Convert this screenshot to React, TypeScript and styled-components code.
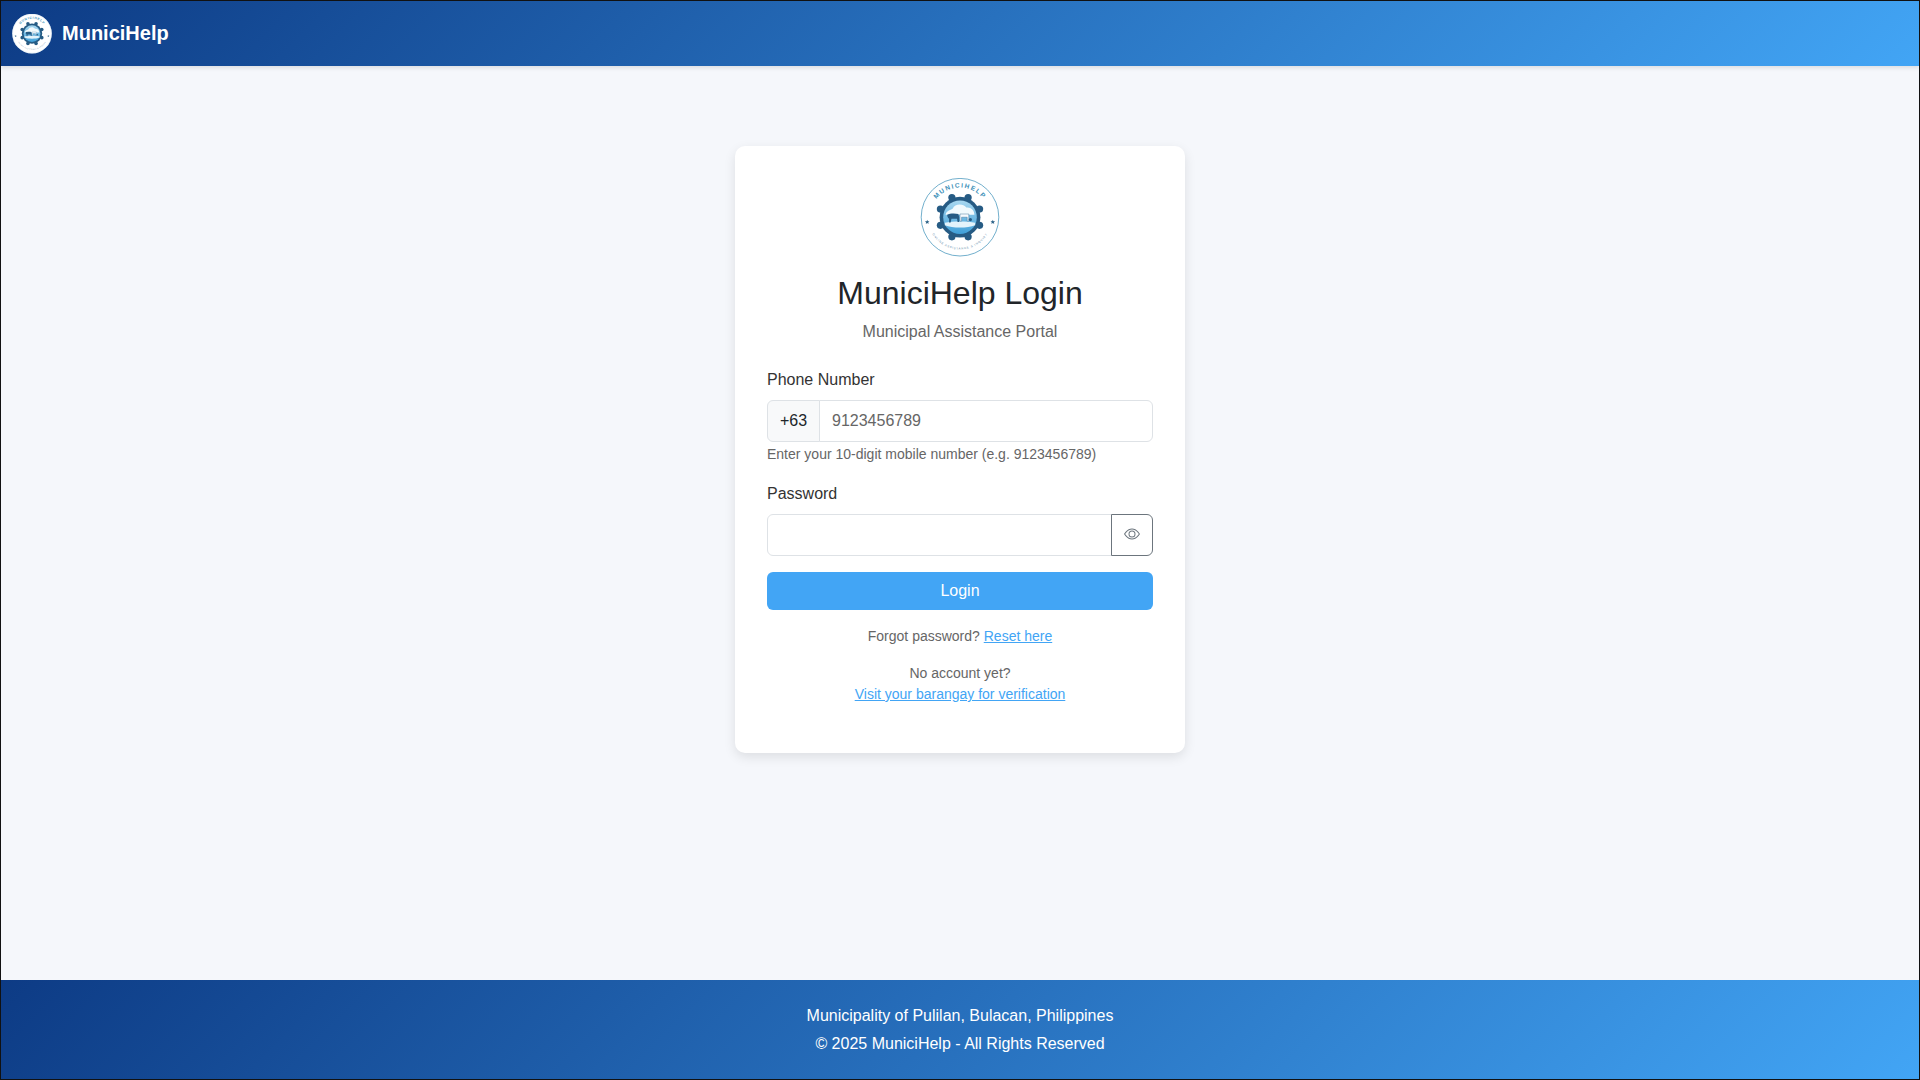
import styled, { createGlobalStyle } from "styled-components";
import { BsEye } from "react-icons/bs";

const GlobalStyle = createGlobalStyle`
  * {
    box-sizing: border-box;
  }
  body {
    margin: 0;
    font-family: "Liberation Sans", Arial, sans-serif;
    color: #212529;
  }
`;

const Page = styled.div`
  height: 1080px;
  display: flex;
  flex-direction: column;
  background: #f5f7fb;
  border: 1px solid #111;
  overflow: hidden;
`;

const Navbar = styled.header`
  height: 65px;
  flex: none;
  display: flex;
  align-items: center;
  gap: 10px;
  padding-left: 11px;
  background: linear-gradient(135deg, #0d3b85, #42a5f5);
  box-shadow: 0 2px 4px rgba(0, 0, 0, 0.1);
`;

const Brand = styled.span`
  color: #fff;
  font-size: 20px;
  font-weight: 700;
`;

const Main = styled.main`
  flex: 1;
  display: flex;
  justify-content: center;
  align-items: flex-start;
  padding-top: 80px;
`;

const Card = styled.section`
  width: 450px;
  height: 607px;
  padding: 32px;
  background: #fff;
  border-radius: 10px;
  box-shadow: 0 4px 12px rgba(0, 0, 0, 0.1);
`;

const LogoRow = styled.div`
  display: flex;
  justify-content: center;
`;

const Title = styled.h1`
  margin: 16px 0 0;
  font-size: 32px;
  line-height: 38px;
  font-weight: 400;
  text-align: center;
`;

const Subtitle = styled.p`
  margin: 8px 0 0;
  font-size: 16px;
  line-height: 24px;
  color: #666;
  text-align: center;
`;

const Field = styled.div<{ $top: number }>`
  margin-top: ${(props) => props.$top}px;
`;

const Label = styled.label`
  display: block;
  margin-bottom: 8px;
  font-size: 16px;
  line-height: 24px;
  color: #333;
`;

const InputGroup = styled.div`
  display: flex;
  height: 42px;
`;

const Prefix = styled.span`
  flex: none;
  width: 53px;
  display: flex;
  align-items: center;
  justify-content: center;
  font-size: 16px;
  background: #f8f9fa;
  border: 1px solid #dee2e6;
  border-radius: 6px 0 0 6px;
`;

const Input = styled.input<{ $joined: "left" | "right" }>`
  flex: 1;
  min-width: 0;
  padding: 0 12px;
  font-family: inherit;
  font-size: 16px;
  color: #212529;
  background: #fff;
  border: 1px solid #dee2e6;
  border-radius: ${(props) => (props.$joined === "left" ? "0 6px 6px 0" : "6px 0 0 6px")};
  margin-left: ${(props) => (props.$joined === "left" ? "-1px" : "0")};
  outline: none;
  &::placeholder {
    color: #666;
    opacity: 1;
  }
`;

const EyeButton = styled.button`
  flex: none;
  width: 42px;
  margin-left: -1px;
  display: flex;
  align-items: center;
  justify-content: center;
  padding: 0 0 2px;
  color: #6c757d;
  background: #fff;
  border: 1px solid #6c757d;
  border-radius: 0 6px 6px 0;
`;

const Help = styled.div`
  margin-top: 4px;
  font-size: 14px;
  line-height: 17px;
  color: #666;
`;

const LoginButton = styled.button`
  display: block;
  width: 100%;
  height: 38px;
  margin-top: 16px;
  padding: 0;
  font-family: inherit;
  font-size: 16px;
  color: #fff;
  background: #42a5f5;
  border: 0;
  border-radius: 6px;
`;

const Note = styled.p<{ $top: number }>`
  margin: ${(props) => props.$top}px 0 0;
  font-size: 14px;
  line-height: 21px;
  color: #666;
  text-align: center;
  a {
    color: #42a5f5;
  }
`;

const Footer = styled.footer`
  height: 99px;
  flex: none;
  display: flex;
  flex-direction: column;
  align-items: center;
  justify-content: center;
  gap: 4px;
  color: #fff;
  font-size: 16px;
  line-height: 24px;
  background: linear-gradient(135deg, #0d3b85, #42a5f5);
`;

const starPath = "M0-2.800.8-.9l2 .1-1.500 1.300.5 2L0 1.400-1.800 2.500l.5-2L-2.800-.8l2-.1z";

function Logo({ size, ring, id }: { size: number; ring: string; id: string }) {
  const lobes = Array.from({ length: 8 }, (_, i) => i * 45 + 22.5);
  return (
    <svg width={size} height={size} viewBox="0 1 100 100">
      <defs>
        <path id={`${id}Top`} d="M13 50a37 37 0 0 1 74 0" />
        <path id={`${id}Bottom`} d="M12 50a38 38 0 0 0 76 0" />
        <linearGradient id={`${id}Sky`} x1="0" y1="0" x2="0" y2="1">
          <stop offset="0" stopColor="#a9d8f0" />
          <stop offset="1" stopColor="#3f9fd8" />
        </linearGradient>
      </defs>
      <circle cx="50" cy="50" r="49.500" fill="#fff" />
      <circle cx="50" cy="50" r="48.500" fill="none" stroke={ring} strokeWidth="0.9" />
      <text fontFamily="Liberation Sans, sans-serif" fontSize="8" fontWeight="700" fill="#3b8fb8" letterSpacing="1.8">
        <textPath href={`#${id}Top`} startOffset="50%" textAnchor="middle">
          MUNICIHELP
        </textPath>
      </text>
      <text fontFamily="Liberation Sans, sans-serif" fontSize="3.600" fill="#5b88a6" letterSpacing="0.8" dominantBaseline="hanging">
        <textPath href={`#${id}Bottom`} startOffset="50%" textAnchor="middle">
          ONLINE ASSISTANCE &amp; INQUIRY
        </textPath>
      </text>
      <path d={starPath} transform="translate(9 56)" fill="#2b6288" />
      <path d={starPath} transform="translate(91 56)" fill="#2b6288" />
      <circle cx="50" cy="50" r="25.500" fill="#265b84" />
      {lobes.map((angle) => (
        <circle
          key={angle}
          cx={50 + 26.500 * Math.cos((angle * Math.PI) / 180)}
          cy={50 + 26.500 * Math.sin((angle * Math.PI) / 180)}
          r="4.500"
          fill="#265b84"
        />
      ))}
      <circle cx="50" cy="50" r="21" fill={`url(#${id}Sky)`} />
      <path d="M32 47c1-6 7-6 9-8 2-6 13-7 17-1 5-1 10 3 10 9z" fill="#f2fafd" />
      <path d="M31 57c10-2 28-2 38 0v3c-10 4-28 4-38 0z" fill="#e3f3fb" />
      <path d="M34 47c3-2 10-2 14-1l1 4v6h-2l-.7-4h-7l-1 4.500h-2V52c-1.500-1-2.300-3-2.300-5z" fill="#265b84" />
      <path d="M50 46h11v9h-2v-5h-7v5h-2z" fill="#f7fbfe" stroke="#265b84" strokeWidth="0.5" />
      <circle cx="63" cy="53" r="2" fill="#265b84" />
    </svg>
  );
}

export default function App() {
  return (
    <Page>
      <GlobalStyle />
      <Navbar>
        <Logo size={40} ring="#cfe3ef" id="nav" />
        <Brand>MuniciHelp</Brand>
      </Navbar>
      <Main>
        <Card>
          <LogoRow>
            <Logo size={80} ring="#3b8fb8" id="card" />
          </LogoRow>
          <Title>MuniciHelp Login</Title>
          <Subtitle>Municipal Assistance Portal</Subtitle>
          <Field $top={24}>
            <Label>Phone Number</Label>
            <InputGroup>
              <Prefix>+63</Prefix>
              <Input $joined="left" placeholder="9123456789" />
            </InputGroup>
            <Help>Enter your 10-digit mobile number (e.g. 9123456789)</Help>
          </Field>
          <Field $top={19}>
            <Label>Password</Label>
            <InputGroup>
              <Input $joined="right" type="password" />
              <EyeButton>
                <BsEye size={16} />
              </EyeButton>
            </InputGroup>
          </Field>
          <LoginButton>Login</LoginButton>
          <Note $top={16}>
            Forgot password? <a href="#reset">Reset here</a>
          </Note>
          <Note $top={16}>
            No account yet?
            <br />
            <a href="#visit">Visit your barangay for verification</a>
          </Note>
        </Card>
      </Main>
      <Footer>
        <div>Municipality of Pulilan, Bulacan, Philippines</div>
        <div>© 2025 MuniciHelp - All Rights Reserved</div>
      </Footer>
    </Page>
  );
}
